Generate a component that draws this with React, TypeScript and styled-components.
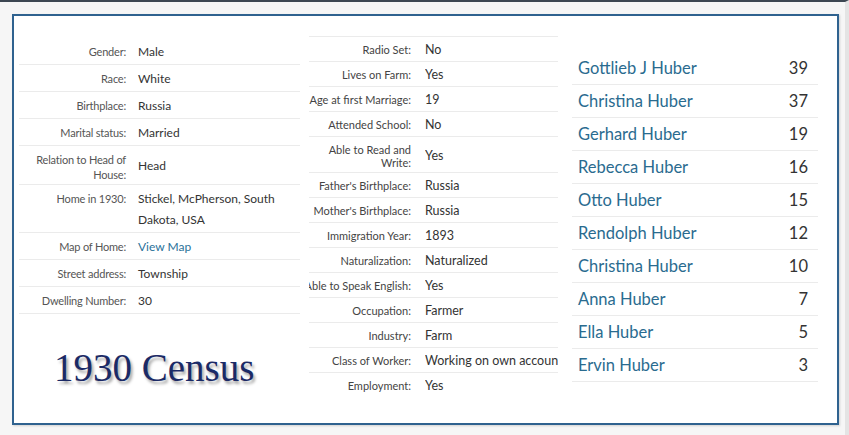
import React from 'react';
import styled, { createGlobalStyle } from 'styled-components';

const GlobalStyle = createGlobalStyle`
  html, body {
    margin: 0;
    padding: 0;
    background: #f3f3f3;
  }
  body {
    width: 849px;
    height: 435px;
    overflow: hidden;
    font-family: Lato, "Open Sans", sans-serif;
  }
`;

const Page = styled.div`
  box-sizing: border-box;
  width: 849px;
  height: 435px;
  border-top: 2px solid #3d4752;
  border-right: 4px solid #e4e4e4;
  padding: 12px 6px 10px 12px;
  background: #f6f6f6;
`;

const Frame = styled.div`
  box-sizing: border-box;
  width: 827px;
  height: 411px;
  border: 2px solid #2f628f;
  background: #fff;
  display: flex;
  align-items: flex-start;
  padding: 0 18px 0 5px;
  box-shadow: 1px 1px 2px rgba(0, 0, 0, 0.15);
`;

const LeftCol = styled.div`
  width: 281px;
  padding-top: 22px;
  display: flex;
  flex-direction: column;
`;

const MiddleCol = styled.div`
  width: 249px;
  margin-left: 9px;
  padding-top: 20px;
`;

const RightCol = styled.div`
  width: 246px;
  margin-left: 14px;
  padding-top: 36px;
`;

const Row = styled.div<{ $labelW: number; $gap: number; $last?: boolean }>`
  display: grid;
  grid-template-columns: ${p => p.$labelW}px 1fr;
  column-gap: ${p => p.$gap}px;
  border-bottom: ${p => (p.$last ? '0' : '1px solid #ebebeb')};
`;

const LeftLabel = styled.div`
  text-align: right;
  font-size: 11px;
  line-height: 15px;
  color: #555;
  padding: 6px 0 2px;
  align-self: start;
  letter-spacing: -0.2px;
`;

const LeftValue = styled.div<{ $link?: boolean }>`
  font-size: 12px;
  line-height: 21px;
  color: ${p => (p.$link ? '#2a7199' : '#333')};
  padding: 3px 0 2px;
  align-self: center;
`;

const MidTable = styled.div`
  border-top: 1px solid #ebebeb;
`;

const MidLabel = styled.div<{ $wrap?: boolean }>`
  text-align: right;
  font-size: 11px;
  line-height: 13px;
  color: #444;
  padding: 6px 0 3px;
  align-self: start;
  white-space: ${p => (p.$wrap ? 'normal' : 'nowrap')};
  overflow: hidden;
  direction: rtl;
`;

const MidValue = styled.div`
  font-size: 12.5px;
  line-height: 15px;
  color: #333;
  padding: 5px 0 4px;
  align-self: center;
  white-space: nowrap;
  overflow: hidden;
`;

const Title = styled.div`
  margin: 32px 0 0 35px;
  font-family: "Liberation Serif", "DejaVu Serif", serif;
  font-size: 39px;
  line-height: 44px;
  color: #1b2a66;
  text-shadow: 2px 3px 3px rgba(0, 0, 0, 0.35);
`;

const PersonRow = styled.div`
  display: flex;
  justify-content: space-between;
  align-items: center;
  padding: 6px 10px 5px 6px;
  border-bottom: 1px solid #ebebeb;
  font-size: 16.5px;
  line-height: 21px;
`;

const PersonName = styled.span`
  color: #2a6b8f;
`;

const PersonAge = styled.span`
  color: #333;
`;

const leftRows: [string, string, boolean?][] = [
  ['Gender:', 'Male'],
  ['Race:', 'White'],
  ['Birthplace:', 'Russia'],
  ['Marital status:', 'Married'],
  ['Relation to Head of House:', 'Head'],
  ['Home in 1930:', 'Stickel, McPherson, South Dakota, USA'],
  ['Map of Home:', 'View Map', true],
  ['Street address:', 'Township'],
  ['Dwelling Number:', '30'],
];

const midRows: [string, string][] = [
  ['Radio Set:', 'No'],
  ['Lives on Farm:', 'Yes'],
  ['Age at first Marriage:', '19'],
  ['Attended School:', 'No'],
  ['Able to Read and Write:', 'Yes'],
  ["Father's Birthplace:", 'Russia'],
  ["Mother's Birthplace:", 'Russia'],
  ['Immigration Year:', '1893'],
  ['Naturalization:', 'Naturalized'],
  ['Able to Speak English:', 'Yes'],
  ['Occupation:', 'Farmer'],
  ['Industry:', 'Farm'],
  ['Class of Worker:', 'Working on own account'],
  ['Employment:', 'Yes'],
];

const household: [string, number][] = [
  ['Gottlieb J Huber', 39],
  ['Christina Huber', 37],
  ['Gerhard Huber', 19],
  ['Rebecca Huber', 16],
  ['Otto Huber', 15],
  ['Rendolph Huber', 12],
  ['Christina Huber', 10],
  ['Anna Huber', 7],
  ['Ella Huber', 5],
  ['Ervin Huber', 3],
];

const App: React.FC = () => {
  return (
    <>
      <GlobalStyle />
      <Page>
        <Frame>
          <LeftCol>
            {leftRows.map(([label, value, link]) => (
              <Row key={label} $labelW={107} $gap={12}>
                <LeftLabel>{label}</LeftLabel>
                <LeftValue $link={link}>{value}</LeftValue>
              </Row>
            ))}
            <Title>1930 Census</Title>
          </LeftCol>
          <MiddleCol>
            <MidTable>
              {midRows.map(([label, value], i) => (
                <Row key={label} $labelW={102} $gap={14} $last={i === midRows.length - 1}>
                  <MidLabel $wrap={label.startsWith('Able to Read')}>
                    <bdi>{label}</bdi>
                  </MidLabel>
                  <MidValue>{value}</MidValue>
                </Row>
              ))}
            </MidTable>
          </MiddleCol>
          <RightCol>
            {household.map(([name, age], i) => (
              <PersonRow key={name + i}>
                <PersonName>{name}</PersonName>
                <PersonAge>{age}</PersonAge>
              </PersonRow>
            ))}
          </RightCol>
        </Frame>
      </Page>
    </>
  );
};

export default App;
